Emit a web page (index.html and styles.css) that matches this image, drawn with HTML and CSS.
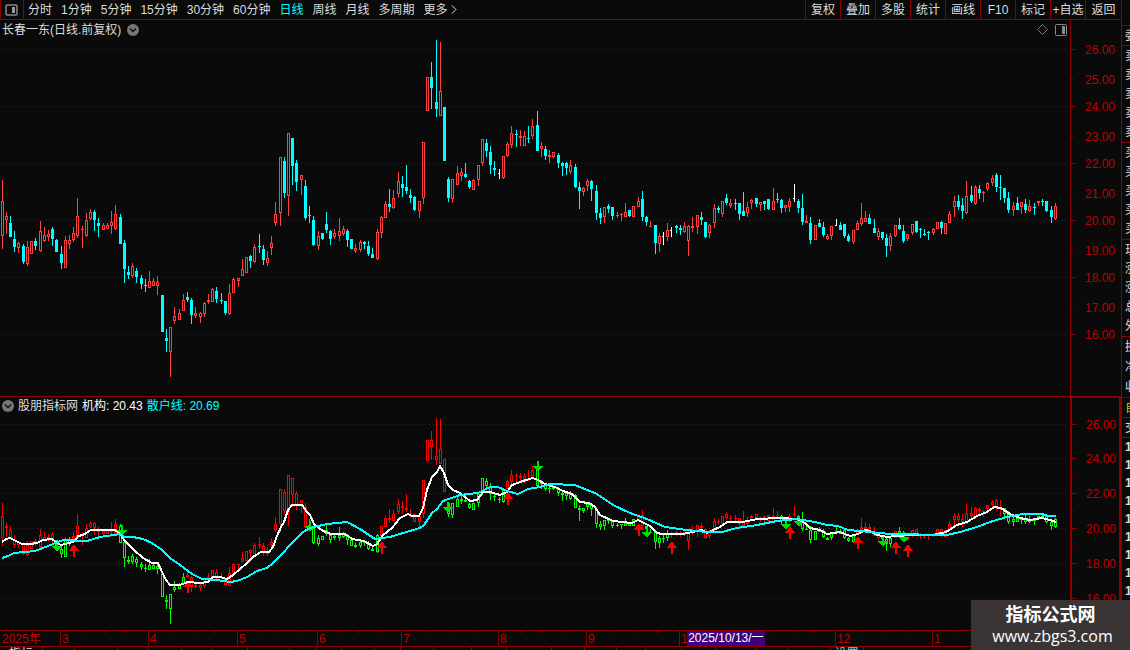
FILE: index.html
```html
<!DOCTYPE html>
<html lang="zh-CN">
<head>
  <meta charset="UTF-8">
  <title>长春一东</title>
  <meta name="viewport" content="width=device-width, initial-scale=1">
  <link rel="stylesheet" href="styles.css">
</head>
<body>

<div class="main">
  <div class="toolbar">
    <button class="layout-btn" aria-label="布局">
      <svg width="13" height="12" viewBox="0 0 13 12"><rect x="1" y="1" width="11" height="10" rx="1" fill="none" stroke="#888" stroke-width="1.5"/><rect x="7" y="3" width="3" height="6" fill="#999"/></svg>
    </button>
    <nav class="periods">
      <button>分时</button>
      <button>1分钟</button>
      <button>5分钟</button>
      <button>15分钟</button>
      <button>30分钟</button>
      <button>60分钟</button>
      <button class="active">日线</button>
      <button>周线</button>
      <button>月线</button>
      <button>多周期</button>
      <button>更多<svg width="6" height="9" viewBox="0 0 6 9"><path d="M1 0.5l4 4-4 4" fill="none" stroke="#ddd"/></svg></button>
    </nav>
    <div class="tools">
      <button>复权</button>
      <button>叠加</button>
      <button>多股</button>
      <button>统计</button>
      <button>画线</button>
      <button>F10</button>
      <button>标记</button>
      <button>+自选</button>
      <button>返回</button>
    </div>
  </div>

  <div class="panel price">
    <div class="plot">
      <div class="legend">
        <span>长春一东(日线.前复权)</span>
        <svg class="fold" width="12" height="12" viewBox="0 0 12 12"><circle cx="6" cy="6" r="6" fill="#777"/><path d="M3 4.5l3 3 3-3" fill="none" stroke="#111" stroke-width="1.4"/></svg>
        <span class="legend-icons">
          <svg width="11" height="11" viewBox="0 0 11 11"><path d="M5.5 0.5l5 5-5 5-5-5z" fill="none" stroke="#777"/></svg>
          <svg width="12" height="12" viewBox="0 0 12 12"><rect x="0.5" y="0.5" width="11" height="11" rx="1" fill="none" stroke="#888"/><rect x="7" y="2" width="3" height="8" fill="#888"/></svg>
        </span>
      </div>
      <svg id="price-chart" class="chart" viewBox="0 38 1070 358" preserveAspectRatio="none"></svg>
    </div>
    <svg id="price-axis" class="axis"></svg>
  </div>

  <div class="panel indicator">
    <div class="plot">
      <div class="legend">
        <svg class="fold" width="12" height="12" viewBox="0 0 12 12"><circle cx="6" cy="6" r="6" fill="#777"/><path d="M3 4.5l3 3 3-3" fill="none" stroke="#111" stroke-width="1.4"/></svg>
        <span>股朋指标网</span>
        <span class="white">机构: 20.43</span>
        <span class="cyan">散户线: 20.69</span>
      </div>
      <svg id="ind-chart" class="chart" viewBox="0 415 1070 215" preserveAspectRatio="none"></svg>
    </div>
    <svg id="ind-axis" class="axis"></svg>
  </div>

  <div class="timeline">
    <svg id="time-axis"></svg>
    <span class="cursor-date">2025/10/13/一</span>
  </div>
  <div class="tabs">
    <button>指标</button>
    <span></span><span></span><span></span><span></span><span></span><span></span><span></span><span></span><span></span><span></span><span></span><span></span><span></span><span></span><span></span><span></span><span></span><span></span><span></span><span></span><span></span><span></span><span></span>
    <button class="cyan">设置</button>
  </div>
</div>

<aside class="quote">
  <ul><li>委</li></ul>
  <ul class="five"><li>卖</li><li>卖</li><li>卖</li><li>卖</li><li>卖</li></ul>
  <ul class="five"><li>买</li><li>买</li><li>买</li><li>买</li><li>买</li></ul>
  <ul class="five"><li>现</li><li>涨</li><li>涨</li><li>总</li><li>外</li></ul>
  <ul class="three"><li>换</li><li>净</li><li>收</li></ul>
  <ul class="own"><li>自</li></ul>
  <ul><li>交</li></ul>
  <ul class="ticks"><li>14</li><li>14</li><li>14</li><li>14</li><li>14</li><li>14</li><li>14</li><li>14</li><li>14</li></ul>
</aside>

<div class="watermark">
  <strong>指标公式网</strong>
  <span>www.zbgs3.com</span>
</div>

<script src="chart.js"></script>
</body>
</html>
```
FILE: styles.css
```css
* {
  box-sizing: border-box;
}

body {
  margin: 0;
  height: 100vh;
  display: flex;
  overflow: hidden;
  background-color: #0a0a0a;
  color: #ddd;
  font-family: "Liberation Sans", "Noto Sans CJK SC", sans-serif;
  font-size: 12px;
  line-height: 18px;
}

button {
  padding: 0;
  border: none;
  background: none;
  color: inherit;
  font: inherit;
  white-space: nowrap;
  cursor: pointer;
}

.main {
  flex: 1;
  min-width: 0;
  display: flex;
  flex-direction: column;
}

/* toolbar */
.toolbar {
  display: flex;
  flex: none;
  height: 20px;
  border-bottom: 1px solid #8b0000;
}

.layout-btn {
  width: 24px;
  padding-right: 2px;
  border-left: 1px solid #8b0000;
  border-right: 1px solid #8b0000;
  display: flex;
  align-items: center;
  justify-content: center;
}

.periods {
  display: flex;
  gap: 9px;
  padding-left: 4px;
}

.periods .active,
.cyan {
  color: #00ffff;
}

.periods svg {
  margin-left: 3px;
}

.tools {
  display: flex;
  margin-left: auto;
}

.tools button {
  width: 35px;
  border-left: 1px solid #8b0000;
}

.tools button:last-child {
  width: 36px;
}

/* charts */
.panel {
  display: flex;
  min-height: 0;
}

.price {
  flex: 376;
}

.indicator {
  flex: 234;
}

.plot {
  flex: 1;
  min-width: 0;
  display: flex;
  flex-direction: column;
}

.indicator .plot {
  border-top: 1px solid #8b0000;
}

.legend {
  display: flex;
  flex: none;
  align-items: center;
  gap: 4px;
  height: 18px;
  padding-left: 2px;
}

.price .legend {
  gap: 6px;
  padding-top: 2px;
}

.legend-icons {
  display: flex;
  gap: 7px;
  margin-left: auto;
  padding-right: 3px;
}

.white {
  color: #fff;
}

.chart {
  display: block;
  flex: 1;
  width: 100%;
  min-height: 0;
}

.axis {
  flex: none;
  width: 51px;
  height: 100%;
  border-left: 1px solid #8b0000;
}

.indicator .axis {
  border: 2px solid #8b0000;
  border-bottom: none;
}

svg text {
  fill: #c00000;
  font-size: 12px;
}

/* time axis */
.timeline {
  position: relative;
  flex: none;
  height: 17px;
  border-top: 1px solid #8b0000;
  border-bottom: 1px solid #8b0000;
}

.timeline svg {
  display: block;
  width: 100%;
  height: 15px;
}

.cursor-date {
  position: absolute;
  left: 61.3%;
  top: 0;
  padding: 0 1px;
  background-color: #400080;
  color: #fff;
  line-height: 15px;
}

.tabs {
  display: grid;
  grid-template-columns: 42fr 31fr 42fr 29fr 33fr 30fr 34fr 41fr 26fr 24fr 32fr 26fr 32fr 37fr 34fr 43fr 32fr 31fr 29fr 35fr 33fr 39fr 31fr 41fr 32fr 250fr;
  flex: none;
  height: 3px;
  overflow: hidden;
}

.tabs button,
.tabs span {
  height: 14px;
  border-right: 1px solid #8b0000;
  line-height: 14px;
}

/* right quote column, cut by the window edge */
.quote {
  flex: none;
  width: 9px;
  padding-top: 25px;
  overflow: hidden;
  border-left: 1px solid #8b0000;
}

.quote ul {
  margin: 0;
  padding: 0 0 0 3px;
  list-style: none;
  border-top: 1px solid #8b0000;
}

.quote li {
  height: 19px;
  line-height: 20px;
  white-space: nowrap;
}

.quote .five {
  padding-bottom: 1px;
}

.quote .three li {
  height: 20px;
}

.quote .own {
  color: #c8c800;
}

.quote .ticks li {
  height: 18px;
  line-height: 18px;
  font-weight: bold;
}

.watermark {
  position: absolute;
  right: 0;
  bottom: 0;
  width: 159px;
  height: 50px;
  padding-top: 4px;
  display: flex;
  flex-direction: column;
  align-items: center;
  background-color: #3a3534;
  color: #fff;
}

.watermark strong {
  font-size: 18px;
  line-height: 22px;
}

.watermark span {
  padding-left: 4px;
  font-family: "Open Sans", sans-serif;
  font-size: 16px;
  line-height: 20px;
}
```
FILE: chart.js
```js
// x, high, body top, body bottom, low, kind (r = up, c = down, w = flat)
const candles = `
2 180 201 236 249 r|6 212 216 220 234 r|10 216 223 237 237 c|14 231 239 247 252 c|18 242 243 248 253 r
23 244 246 262 264 c|27 241 247 264 266 r|31 241 241 254 254 r|35 238 241 246 250 c|40 221 231 251 252 r
44 227 235 241 242 r|48 230 234 237 241 r|52 227 229 239 246 c|56 239 240 252 252 c|61 246 254 263 269 c
65 236 240 268 268 r|69 235 240 244 249 r|73 227 233 240 242 r|77 198 216 236 238 r|82 226 229 230 248 r
86 213 220 236 237 r|90 209 212 219 220 r|94 210 212 220 231 c|98 218 223 226 237 c|103 223 225 230 230 r
107 223 225 229 229 r|111 211 222 226 234 r|115 205 214 229 230 r|120 214 217 244 244 c|124 240 243 269 283 c
128 266 272 275 279 c|132 263 266 276 278 r|136 268 271 277 283 c|141 275 278 284 289 c|145 279 285 286 292 c
149 271 281 288 288 r|153 278 281 286 286 r|157 276 282 286 295 r|162 295 295 332 332 c|166 329 338 341 352 c
170 327 327 352 377 r|174 307 316 321 324 r|179 309 313 320 320 r|183 294 300 311 311 r|187 292 297 300 302 c
191 298 300 315 324 c|195 307 313 316 318 r|200 312 313 317 323 r|204 302 303 314 317 r|208 294 300 302 304 r
212 288 289 302 302 r|216 287 291 299 303 c|221 293 300 301 304 c|225 301 301 313 315 c|229 284 293 314 315 r
233 278 279 293 293 r|238 278 278 281 287 r|242 259 269 276 276 r|246 257 257 273 273 r|250 255 256 261 268 c
254 244 247 262 263 r|259 234 246 247 253 c|263 245 249 260 265 c|267 251 258 263 266 r|271 236 243 248 255 r
275 202 214 223 226 r|280 157 157 213 226 r|284 157 161 193 198 c|288 133 133 196 216 r|292 138 138 166 185 c
296 160 163 182 191 c|301 175 175 180 195 r|305 180 186 218 220 c|309 206 215 216 223 c|313 216 220 245 246 c
318 231 236 246 250 r|322 233 233 239 240 c|326 212 224 230 233 c|330 230 231 239 245 c|334 229 233 237 239 r
339 218 231 236 241 r|343 226 229 234 236 r|347 229 231 240 247 c|351 239 239 249 249 c|355 244 248 251 253 r
360 240 242 250 252 r|364 241 242 244 249 c|368 241 246 254 256 c|372 248 254 258 258 c|377 229 232 259 260 r
381 216 217 233 238 r|385 201 204 218 218 r|389 189 204 207 212 c|393 190 198 208 209 r|398 172 181 194 198 r
402 176 184 188 197 c|406 165 187 191 194 c|410 189 195 198 203 c|414 196 197 210 211 c|419 201 201 211 218 r
423 142 142 198 204 r|427 77 77 111 111 r|431 62 77 88 109 c|436 40 102 109 117 c|440 42 91 116 116 r
444 107 107 161 161 c|448 177 179 198 202 c|452 179 179 199 203 r|457 166 173 185 185 r|461 168 172 176 181 r
465 163 174 177 178 c|469 180 181 187 189 c|473 179 180 190 190 r|478 165 165 180 186 r|482 139 139 163 166 r
486 139 143 151 157 c|490 146 152 165 174 c|494 161 168 170 176 c|499 169 173 174 179 w|503 156 156 178 179 r
507 142 144 156 157 r|511 126 133 145 148 r|516 130 134 135 147 c|520 130 136 138 146 r|524 131 136 146 146 r
528 126 138 139 143 c|532 119 126 136 139 r|537 111 125 151 151 c|541 142 146 149 157 r|545 146 149 156 160 c
549 150 155 157 163 r|553 152 152 157 158 r|558 153 155 163 168 c|562 162 163 166 176 c|566 162 163 168 175 c
570 160 165 172 174 r|575 164 167 187 188 c|579 182 187 191 209 c|583 187 188 192 196 r|587 179 181 186 191 r
591 180 181 189 201 c|596 185 191 213 220 c|600 208 213 218 224 c|604 207 207 217 223 r|608 204 206 209 213 c
612 207 207 216 220 c|617 212 215 216 218 r|621 213 214 215 221 r|625 203 212 217 217 r|629 210 210 216 217 c
633 206 206 217 217 r|638 197 201 207 207 r|642 191 199 217 221 c|646 216 217 222 226 c|650 221 226 227 227 r
655 225 225 243 254 c|659 233 236 244 252 r|663 232 236 237 245 w|667 223 230 237 241 r|671 227 230 231 237 w
676 225 226 228 233 c|680 225 228 230 235 c|684 222 226 232 233 r|688 225 226 241 256 r|692 217 226 228 232 r
697 215 215 227 234 r|701 212 217 220 225 c|705 222 222 237 238 c|709 224 225 233 238 r|714 204 208 223 228 r
718 206 208 210 213 c|722 201 201 214 217 r|726 194 198 203 205 c|730 199 203 206 208 r|735 199 203 204 210 c
739 203 203 214 220 c|743 192 211 216 216 c|747 202 207 213 217 r|751 199 200 203 209 r|756 198 198 204 207 c
760 202 202 205 211 r|764 201 201 204 210 c|768 199 199 209 210 c|773 188 201 210 210 r|777 193 199 200 203 c
781 199 200 208 213 c|785 205 205 208 212 r|789 198 201 207 212 r|794 184 198 199 202 w|798 199 201 208 213 c
802 194 208 222 225 c|806 215 221 223 223 r|810 217 223 240 244 c|815 225 225 240 240 r|819 219 223 227 227 c
823 222 227 235 237 c|827 234 236 239 240 r|831 226 226 236 240 r|836 219 225 226 226 w|840 222 225 230 230 c
844 224 224 236 238 c|848 234 236 241 242 c|853 230 230 242 244 r|857 221 223 230 230 r|861 203 218 224 226 r
865 211 218 222 222 r|869 214 218 224 224 c|874 219 228 233 233 c|878 228 231 237 240 r|882 232 232 238 240 c
886 234 238 246 257 c|890 233 236 246 251 r|895 225 225 236 237 r|899 218 225 229 230 c|903 225 231 241 243 c
907 234 234 239 241 r|912 224 224 233 235 r|916 221 221 232 233 c|920 228 229 230 238 c|924 229 234 235 236 c
928 231 232 233 240 c|933 228 229 233 235 r|937 222 222 229 229 r|941 221 222 228 234 c|945 223 223 234 234 r
949 211 214 223 223 r|954 196 201 207 217 r|958 195 201 207 210 c|962 198 205 211 219 c|966 181 196 213 214 r
971 186 195 201 203 c|975 185 187 204 205 r|979 185 189 193 199 c|983 191 192 193 202 r|987 182 183 189 191 r
992 175 178 183 186 r|996 173 175 187 192 c|1000 175 187 188 200 c|1004 188 188 198 203 c|1008 192 198 210 213 c
1013 202 206 210 216 r|1017 197 203 210 210 c|1021 202 202 207 214 r|1025 199 204 210 213 c|1029 200 206 211 212 r
1034 203 207 208 215 c|1038 201 201 203 206 r|1042 199 201 202 206 c|1046 201 201 211 212 c|1051 206 210 217 223 c
1055 203 206 219 220 r`.trim().split(/[|\n]/).map(row => {
  const p = row.split(' ');
  return { x: +p[0], high: +p[1], top: +p[2], bottom: +p[3], low: +p[4], kind: p[5] };
});

const inst = '2,542 6,539 10,538 14,540 18,542 22,544 30,544 37,543 43,540 52,539 57,543 61,545 69,543 75,541 78,536 83,535 91,530 100,530 115,530 120,534 125,541 133,549 143,558 152,563 158,563 162,572 166,580 170,585 180,585 188,582 200,583 208,582 213,577 220,577 227,579 233,575 240,569 247,563 253,557 261,552 269,552 273,547 277,536 281,527 284,522 288,510 292,505 302,505 307,512 310,515 314,524 323,531 331,534 345,534 352,539 364,541 373,546 377,544 383,535 392,528 400,518 408,514 412,516 419,516 423,508 427,490 432,477 437,472 440,466 444,473 448,485 453,490 460,493 470,501 477,500 483,492 490,492 500,495 507,492 512,485 523,481 533,478 538,480 545,484 555,487 563,491 572,494 580,502 589,503 595,507 600,515 613,521 632,523 638,520 650,526 657,533 662,534 683,534 697,531 702,530 707,533 713,530 720,527 727,522 743,522 757,519 780,518 797,519 805,523 810,528 820,530 827,534 840,532 850,536 858,534 865,530 870,531 877,535 888,537 895,536 913,535 933,535 946,532 957,525 967,522 977,516 987,512 994,507 1001,508 1010,514 1020,518 1030,520 1042,518 1050,520 1056,522';
const retail = '2,558 8,556 14,553 35,551 43,548 53,544 63,540 87,541 100,537 120,534 125,537 133,537 143,539 152,543 162,550 170,558 180,565 192,574 202,579 217,580 230,582 237,581 247,577 257,571 267,568 273,563 283,553 290,545 303,532 310,528 327,524 347,522 360,529 375,539 390,537 403,533 420,528 424,525 432,513 437,509 443,501 460,495 478,493 490,487 498,487 507,491 518,494 528,489 540,487 550,484 575,485 597,494 613,505 630,513 647,519 665,527 687,530 707,532 722,532 737,528 757,525 777,521 797,519 803,520 815,522 827,525 838,526 848,530 870,532 890,534 947,535 960,532 977,527 993,521 1007,517 1023,514 1042,514 1048,516 1056,516';

// ranges where the short line runs under the long one
const weak = [[54, 70], [120, 184], [309, 378], [446, 504], [536, 634], [645, 668], [780, 786], [798, 854], [882, 891], [898, 904], [1004, 1060]];

const upArrows = [[74, 545], [188, 581], [382, 542], [508, 493], [639, 524], [672, 542], [790, 527], [858, 537], [896, 542], [908, 545]];
const downArrows = [[57, 552], [122, 536], [310, 532], [448, 513], [538, 472], [647, 538], [786, 530], [799, 527], [883, 547], [904, 543]];

const rect = (x, y, w, h, fill) => `<rect x="${x}" y="${y}" width="${w}" height="${h}" fill="${fill}"/>`;

function grid(ys) {
  return ys.map(y => `<path d="M1 ${y + 0.5}H1068" stroke="#7a0c0c" stroke-dasharray="1 3"/>`).join('');
}

function drawCandle(c, color, filled) {
  const h = c.bottom - c.top;
  let out = '';
  if (c.top > c.high) out += rect(c.x, c.high, 1, c.top - c.high, color);
  if (c.low > c.bottom) out += rect(c.x, c.bottom, 1, c.low - c.bottom, color);
  if (c.kind === 'w') return out + rect(c.x - 1, c.top, 2, 1, color);
  if (filled || h < 3) return out + rect(c.x - 1, c.top, 3, Math.max(h, 1), color);
  return out + `<rect x="${c.x - 0.5}" y="${c.top + 0.5}" width="2" height="${h - 1}" fill="none" stroke="${color}"/>`;
}

const priceColors = { r: '#ff4040', c: '#00ffff', w: '#ffffff' };
document.getElementById('price-chart').innerHTML =
  grid([49, 106, 163, 220, 277, 334]) +
  candles.map(c => drawCandle(c, priceColors[c.kind], c.kind === 'c')).join('');

// same bars on the lower panel's scale
const toLower = y => Math.max(418, Math.round(528 + (y - 220) * 0.614));
const lowerBars = candles.map(c => {
  const color = weak.some(r => c.x >= r[0] && c.x <= r[1]) ? '#00ff00' : '#ff0000';
  return drawCandle({
    x: c.x,
    high: toLower(c.high),
    top: toLower(c.top),
    bottom: toLower(c.bottom),
    low: toLower(c.low),
    kind: 'r'
  }, color, false);
}).join('');

const arrows =
  downArrows.map(([x, y]) => `<path d="M${x - 1} ${y - 11}h2v5h4l-5 6-5-6h4z" fill="#00dd00"/>`).join('') +
  upArrows.map(([x, y]) => `<path d="M${x} ${y - 1}l5 7h-4v6h-2v-6h-4z" fill="#ff0000"/>`).join('');

document.getElementById('ind-chart').innerHTML =
  grid([424, 458, 493, 528, 563, 598]) + lowerBars + arrows +
  `<polyline points="${inst}" fill="none" stroke="#ffffff" stroke-width="2"/>` +
  `<polyline points="${retail}" fill="none" stroke="#00ffff" stroke-width="2"/>`;

document.querySelectorAll('.chart').forEach(s => s.setAttribute('shape-rendering', 'crispEdges'));

// value axes: [label, offset from panel top]
function drawAxis(id, height, labels, minor) {
  const pct = y => (y / height * 100).toFixed(2) + '%';
  document.getElementById(id).innerHTML =
    labels.map(([text, y, big]) =>
      `<rect x="0" y="${pct(y)}" width="${big ? 5 : 2}" height="1" fill="#8b0000"/>` +
      `<text x="44" y="${pct(y)}" dy="5" text-anchor="end">${text}</text>`).join('') +
    minor.map(y => `<rect x="0" y="${pct(y)}" width="1" height="1" fill="#8b0000"/>`).join('');
}

drawAxis('price-axis', 376, [
  ['26.00', 29, 1], ['25.00', 59], ['24.00', 86, 1], ['23.00', 116], ['22.00', 143, 1], ['21.00', 173],
  ['20.00', 200, 1], ['19.00', 230], ['18.00', 257, 1], ['17.00', 287], ['16.00', 314, 1]
], []);
drawAxis('ind-axis', 232, [
  ['26.00', 26, 1], ['24.00', 60, 1], ['22.00', 95, 1], ['20.00', 130, 1], ['18.00', 165, 1], ['16.00', 200, 1]
], [43, 78, 113, 148, 183]);

// month marks
const months = [['3', 60], ['4', 148], ['5', 237], ['6', 317], ['7', 401], ['8', 498], ['9', 586], ['1', 679], ['12', 835], ['1', 932]];
const weeks = [82, 104, 126, 170, 193, 215, 257, 277, 297, 338, 359, 380, 425, 450, 474, 520, 542, 564, 609, 633, 656, 771, 793, 814, 859, 884, 909, 953];
const px = x => (x / 1121 * 100).toFixed(2) + '%';
document.getElementById('time-axis').innerHTML =
  '<text x="2" y="12">2025年</text>' +
  months.map(([m, x]) => `<rect x="${px(x)}" y="0" width="1" height="15" fill="#8b0000"/><text x="${px(x)}" dx="2" y="12">${m}</text>`).join('') +
  weeks.map(x => `<rect x="${px(x)}" y="0" width="1" height="2" fill="#8b0000"/>`).join('');
```
